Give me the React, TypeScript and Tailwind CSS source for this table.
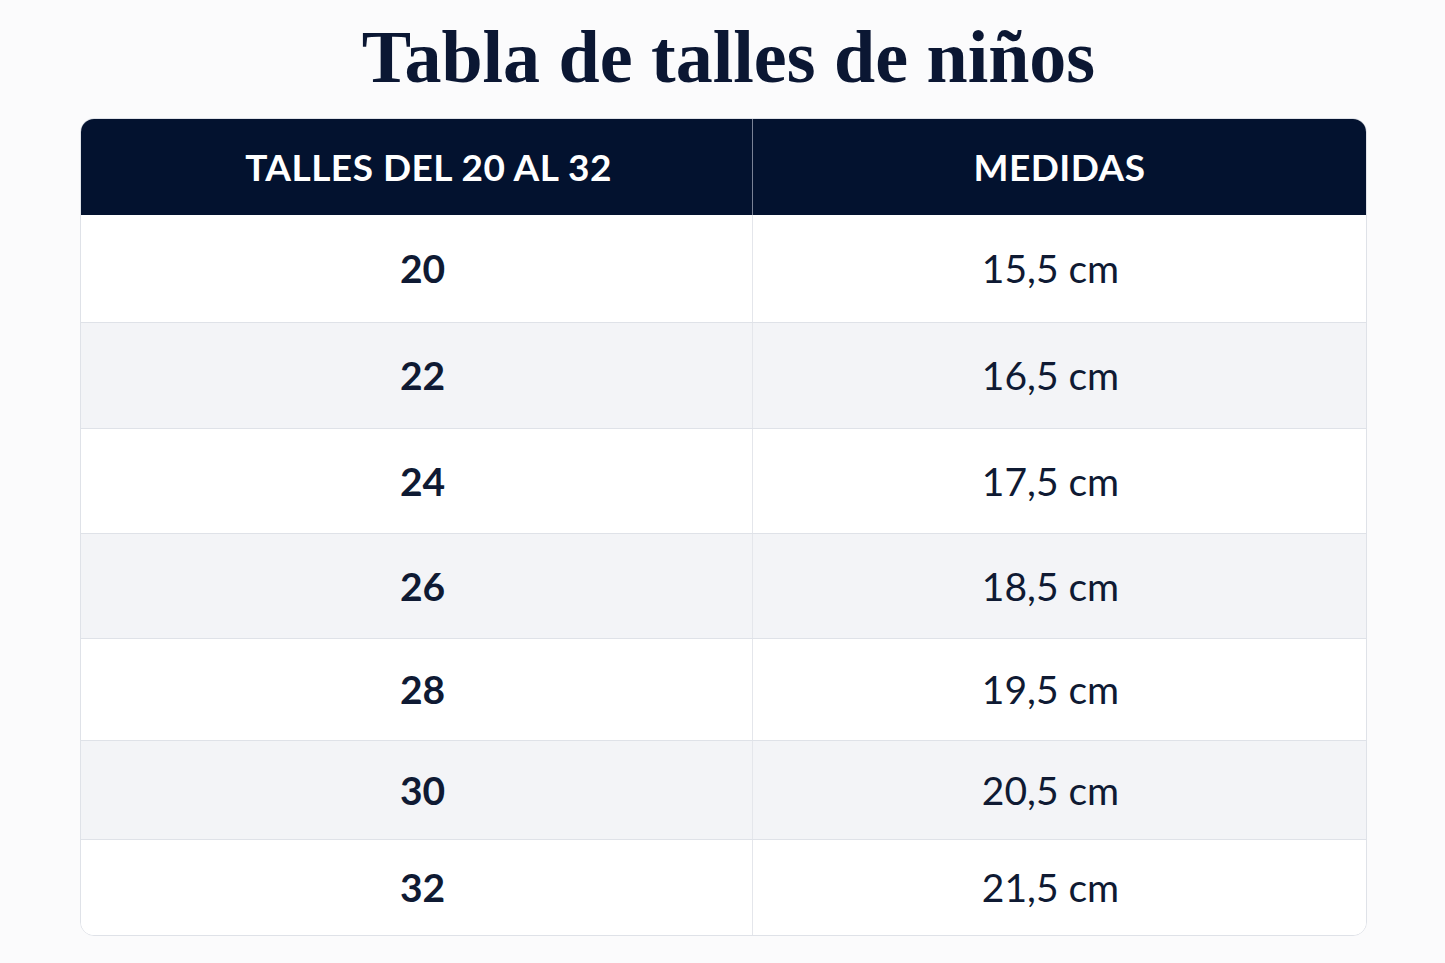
const rows = [
  { talle: "20", medida: "15,5 cm", h: "h-[107px]" },
  { talle: "22", medida: "16,5 cm", h: "h-[106px]" },
  { talle: "24", medida: "17,5 cm", h: "h-[105px]" },
  { talle: "26", medida: "18,5 cm", h: "h-[105px]" },
  { talle: "28", medida: "19,5 cm", h: "h-[102px]" },
  { talle: "30", medida: "20,5 cm", h: "h-[99px]" },
  { talle: "32", medida: "21,5 cm", h: "h-[96px]" },
];

export default function App() {
  return (
    <div className="min-h-[963px] w-full bg-[#fbfbfc] pt-[15px]">
      <h1 className="pl-[12px] text-center font-['Liberation_Serif',serif] text-[74px] font-bold leading-[84px] text-[#0b1733]">
        Tabla de talles de niños
      </h1>
      <div className="ml-[80px] mr-[78px] mt-[19px] overflow-hidden rounded-[14px] border border-[#dfe2e8] bg-white font-['Lato',sans-serif] text-[#0f1a33]">
        <div className="grid h-[96px] grid-cols-[672px_1fr] bg-[#03122f] text-[37px] font-bold tracking-[0.5px] text-white">
          <div className="flex items-center justify-center border-r border-[#7a8296] pl-[24px]">
            TALLES DEL 20 AL 32
          </div>
          <div className="flex items-center justify-center">MEDIDAS</div>
        </div>
        {rows.map((r, i) => (
          <div
            key={r.talle}
            className={`grid grid-cols-[672px_1fr] text-[39px] ${r.h} ${
              i % 2 === 1 ? "bg-[#f3f4f7]" : "bg-white"
            } ${i > 0 ? "border-t border-[#dfe2e8]" : ""}`}
          >
            <div className="flex items-center justify-center border-r border-[#e4e6eb] pl-[12px] font-bold">
              {r.talle}
            </div>
            <div className="flex items-center justify-center pr-[18px]">{r.medida}</div>
          </div>
        ))}
      </div>
    </div>
  );
}
